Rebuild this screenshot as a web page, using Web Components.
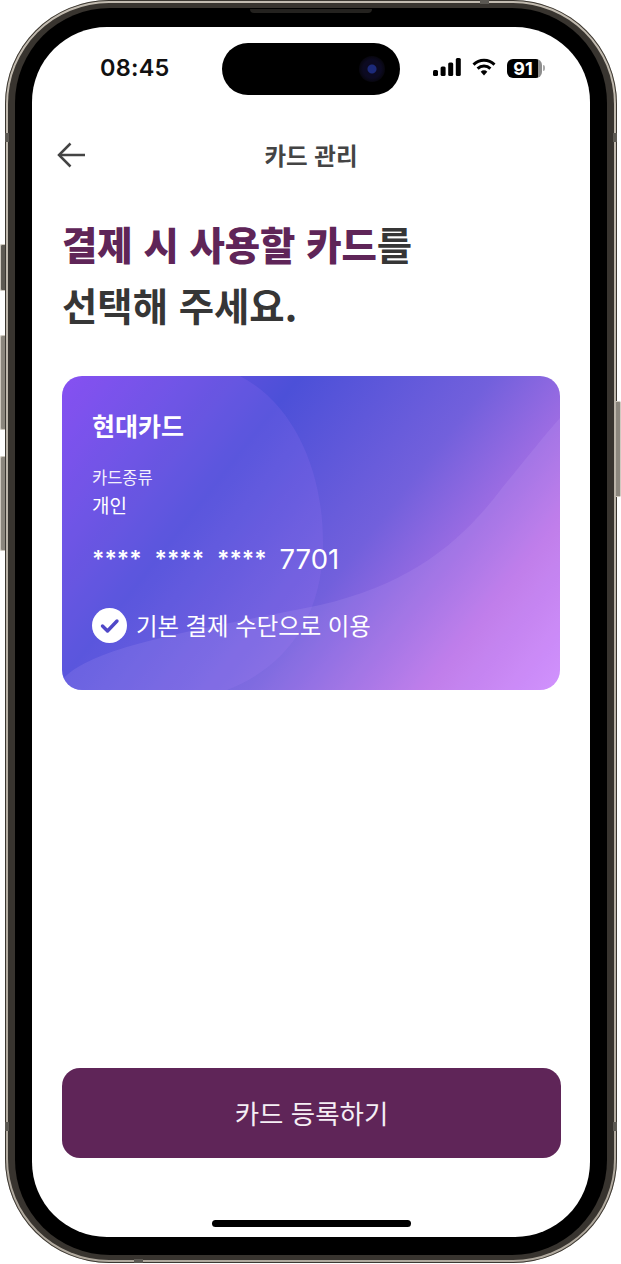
<!DOCTYPE html>
<html lang="ko">
<head>
<meta charset="utf-8">
<title>카드 관리</title>
<style>
  html, body { margin: 0; padding: 0; background: #fff; }
  body { font-family: "Noto Sans CJK KR", "Noto Sans", sans-serif; }
</style>
</head>
<body>
<phone-frame>
  <status-bar time="08:45" battery="91"></status-bar>
  <nav-header>카드 관리</nav-header>
  <page-title><b>결제 시 사용할 카드</b>를<br>선택해 주세요.</page-title>
  <pay-card name="현대카드" kind="개인" last="7701">기본 결제 수단으로 이용</pay-card>
  <primary-button>카드 등록하기</primary-button>
</phone-frame>

<script>
class PhoneFrame extends HTMLElement {
    constructor() {
        super();
        this.attachShadow({ mode: 'open' }).innerHTML = `<style>
            :host { display: block; position: relative; width: 612px; height: 1263px; margin-left: 5px; }
            .metal { height: 100%; box-sizing: border-box; padding: 3px; border-radius: 104px;
                background: linear-gradient(#c2bbb0, #b0a99e); box-shadow: inset 0 0 0 1px #3b3731; }
            .inner { height: 100%; box-sizing: border-box; padding: 5px 7px; border-radius: 101px; background: #38342f; }
            .bezel { height: 100%; box-sizing: border-box; padding: 19px 17px 18px 17px; border-radius: 95px; background: #000; }
            .screen { height: 100%; border-radius: 75px; background: #fff; overflow: hidden;
                display: flex; flex-direction: column; }
            .home { margin: 0 0 10px 180px; width: 199px; height: 7px; border-radius: 4px; background: #000; flex: none; }
            .speaker { position: absolute; left: 245px; top: 9px; width: 122px; height: 4px; background: #24221f; border-radius: 0 0 4px 4px; }
            .btn { position: absolute; width: 5px; box-sizing: border-box; background: #8b867d;
                border: 1px solid #cfc9bf; border-right: 0; border-radius: 2px 0 0 2px; }
            .btn.right { left: 611px; border-left: 0; border-right: 1px solid #cfc9bf; border-radius: 0 2px 2px 0; }
            .band { position: absolute; background: #5b5852; }
        </style>
        <div class="btn" style="left:-5px;top:244px;height:47px;background:#5e5a53"></div>
        <div class="btn" style="left:-5px;top:335px;height:95px"></div>
        <div class="btn" style="left:-5px;top:456px;height:95px"></div>
        <div class="btn right" style="top:401px;height:96px"></div>
        <div class="metal"><div class="inner"><div class="bezel">
            <div class="screen">
                <slot></slot>
                <div class="home"></div>
            </div>
        </div></div></div>
        <div class="speaker"></div>
        <div class="band" style="left:0;top:133px;width:4px;height:9px"></div>
        <div class="band" style="right:0;top:133px;width:4px;height:9px"></div>
        <div class="band" style="left:0;top:1122px;width:4px;height:9px"></div>
        <div class="band" style="right:0;top:1122px;width:4px;height:9px"></div>
        <div class="band" style="left:475px;top:0;width:9px;height:4px"></div>
        <div class="band" style="left:129px;bottom:0;width:9px;height:4px"></div>`;
    }
}

class StatusBar extends HTMLElement {
    constructor() {
        super();
        this.attachShadow({ mode: 'open' });
    }

    connectedCallback() {
        const time = this.getAttribute('time');
        const battery = this.getAttribute('battery');
        this.shadowRoot.innerHTML = `<style>
            :host { display: grid; grid-template-columns: 190px 178px 1fr; align-items: center; padding-top: 16px; height: 52px; flex: none; }
            .time { padding-left: 68px; font: 600 23.5px/1 Inter, "Liberation Sans", sans-serif; color: #111; letter-spacing: .2px; margin-top: -3px; }
            .island { height: 52px; border-radius: 26px; background: #000; display: flex; align-items: center; justify-content: flex-end; padding-right: 15px; box-sizing: border-box; }
            .cam { width: 26px; height: 26px; border-radius: 50%; background: radial-gradient(circle, #1c2a7a 0 4px, #0c0a22 5px 9px, #07060e 13px); }
            .icons { display: flex; align-items: center; padding-left: 33px; margin-top: -4px; }
            .wifi { margin-left: 11px; }
            .bat { margin-left: 11px; margin-top: 2px; display: flex; align-items: center; }
            .cell { width: 35px; height: 19px; border-radius: 6px; box-sizing: border-box; background: linear-gradient(90deg, #000 0 88%, #8d8d8d 88%); color: #fff;
                font: 700 18px/19px Inter, "Liberation Sans", sans-serif; text-align: center; padding-right: 3px; }
            .nub { width: 2px; height: 6px; margin-left: 1px; background: #aaa; border-radius: 0 2px 2px 0; }
        </style>
        <div class="time">${time}</div>
        <div class="island"><div class="cam"></div></div>
        <div class="icons">
            <svg width="28" height="18" viewBox="0 0 28 18"><rect x="0" y="12" width="5" height="6" rx="1.5"/><rect x="7.6" y="8.5" width="5" height="9.5" rx="1.5"/><rect x="15.2" y="4.5" width="5" height="13.5" rx="1.5"/><rect x="22.8" y="0" width="5" height="18" rx="1.5"/></svg>
            <svg class="wifi" width="24" height="18" viewBox="0 0 24 18"><path d="M1.5 6.6a15 15 0 0 1 21 0" fill="none" stroke="#000" stroke-width="2.9"/><path d="M5.6 10.6a9.2 9.2 0 0 1 12.8 0" fill="none" stroke="#000" stroke-width="2.9"/><path d="M8.7 13.7a4.7 4.7 0 0 1 6.6 0L12 17.4z"/></svg>
            <div class="bat"><div class="cell">${battery}</div><div class="nub"></div></div>
        </div>`;
    }
}

class NavHeader extends HTMLElement {
    constructor() {
        super();
        this.attachShadow({ mode: 'open' }).innerHTML = `<style>
            :host { display: flex; align-items: center; height: 58px; margin-top: 31px; padding-left: 25px; position: relative; flex: none; color: #444; }
            svg { display: block; }
            .t { position: absolute; left: 0; right: 0; text-align: center; font-size: 23.5px; font-weight: 700; line-height: 58px; }
        </style>
        <svg width="28" height="26" viewBox="0 0 28 26" fill="none" stroke="#444" stroke-width="2.5"><path d="M28 13H2"/><path d="M13.5 1.5 2 13l11.500 11.500"/></svg>
        <div class="t"><slot></slot></div>`;
    }
}

class PageTitle extends HTMLElement {
    constructor() {
        super();
        this.attachShadow({ mode: 'open' }).innerHTML = `<style>
            :host { display: block; flex: none; margin-top: 29px; padding-left: 30px; font-size: 38.4px; font-weight: 700; line-height: 61px; color: #363636; }
            ::slotted(b) { color: #5f2558; }
        </style><slot></slot>`;
    }
}

class PayCard extends HTMLElement {
    constructor() {
        super();
        this.attachShadow({ mode: 'open' });
    }

    connectedCallback() {
        const stars = '<span class="stars">****</span>'.repeat(3);
        this.shadowRoot.innerHTML = `<style>
            :host { display: block; position: relative; flex: none; width: 498px; height: 314px; margin: 41px 0 0 30px; box-sizing: border-box;
                padding: 32px 30px 0; border-radius: 20px; overflow: hidden; color: #fff;
                background: linear-gradient(128deg, #8049f0 0%, #5a50dc 24%, #4c50d8 32%, #7260dc 58%, #bd76e8 82%, #d08cfe 100%); }
            svg.bg { position: absolute; left: 0; top: 0; }
            .c { position: relative; }
            .name { font-size: 25px; font-weight: 700; line-height: 34px; }
            .kind { margin-top: 23px; font-size: 16.500px; line-height: 24px; opacity: .92; }
            .val { margin-top: 2px; font-size: 19px; line-height: 28px; }
            .num { display: flex; align-items: baseline; gap: 15.500px; margin-top: 21px; height: 42px; font-family: Inter, "Liberation Sans", sans-serif; }
            .stars { width: 47px; font-size: 23px; line-height: 42px; font-weight: 600; position: relative; top: -2px; }
            .last { font-size: 27.500px; font-weight: 400; }
            .def { display: flex; align-items: center; gap: 9px; margin-top: 26px; font-size: 23.400px; line-height: 35px; }
        </style>
        <svg class="bg" width="498" height="314" viewBox="0 0 498 314">
            <path d="M178 0C235 30 262 100 261 170C260 250 215 295 165 314H0V0Z" fill="#b080ff" fill-opacity=".14"/>
            <path d="M0 314V304C30 270 130 255 258 229C350 208 400 165 440 112C460 88 480 62 498 42V314Z" fill="#d8b8ff" fill-opacity=".13"/>
        </svg>
        <div class="c">
            <div class="name">${this.getAttribute('name')}</div>
            <div class="kind">카드종류</div>
            <div class="val">${this.getAttribute('kind')}</div>
            <div class="num">${stars}<span class="last">${this.getAttribute('last')}</span></div>
            <div class="def">
                <svg width="35" height="35" viewBox="0 0 35 35"><circle cx="17.500" cy="17.500" r="17.500" fill="#fff"/><path d="M10.500 18l5 5L25 13" fill="none" stroke="#5048c8" stroke-width="3.400" stroke-linecap="round" stroke-linejoin="round"/></svg>
                <span><slot></slot></span>
            </div>
        </div>`;
    }
}

class PrimaryButton extends HTMLElement {
    constructor() {
        super();
        this.attachShadow({ mode: 'open' }).innerHTML = `<style>
            :host { display: block; flex: none; width: 499px; height: 90px; margin: auto 0 62px 30px; border-radius: 18px; background: #5f2558;
                color: #f5eff5; font-size: 26.500px; font-weight: 400; line-height: 90px; text-align: center; }
        </style><slot></slot>`;
    }
}

customElements.define('phone-frame', PhoneFrame);
customElements.define('status-bar', StatusBar);
customElements.define('nav-header', NavHeader);
customElements.define('page-title', PageTitle);
customElements.define('pay-card', PayCard);
customElements.define('primary-button', PrimaryButton);
</script>
</body>
</html>
